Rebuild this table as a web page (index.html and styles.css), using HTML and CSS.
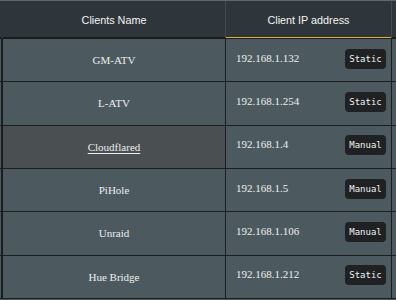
FILE: index.html
```html
<!DOCTYPE html>
<html>
<head>
<meta charset="utf-8">
<link rel="stylesheet" href="styles.css">
</head>
<body>
<div class="clients">
  <div class="row head">
    <div class="stub"></div>
    <div class="cell name">Clients Name</div>
    <div class="cell ip sorted">Client IP address</div>
    <div class="extra"></div>
  </div>
  <div class="row">
    <div class="stub"></div>
    <div class="cell name">GM-ATV</div>
    <div class="cell ip"><span class="addr">192.168.1.132</span><span class="badge">Static</span></div>
    <div class="extra"></div>
  </div>
  <div class="row">
    <div class="stub"></div>
    <div class="cell name">L-ATV</div>
    <div class="cell ip"><span class="addr">192.168.1.254</span><span class="badge">Static</span></div>
    <div class="extra"></div>
  </div>
  <div class="row hover">
    <div class="stub"></div>
    <div class="cell name"><span class="link">Cloudflared</span></div>
    <div class="cell ip"><span class="addr">192.168.1.4</span><span class="badge">Manual</span></div>
    <div class="extra"></div>
  </div>
  <div class="row">
    <div class="stub"></div>
    <div class="cell name">PiHole</div>
    <div class="cell ip"><span class="addr">192.168.1.5</span><span class="badge">Manual</span></div>
    <div class="extra"></div>
  </div>
  <div class="row">
    <div class="stub"></div>
    <div class="cell name">Unraid</div>
    <div class="cell ip"><span class="addr">192.168.1.106</span><span class="badge">Manual</span></div>
    <div class="extra"></div>
  </div>
  <div class="row">
    <div class="stub"></div>
    <div class="cell name">Hue Bridge</div>
    <div class="cell ip"><span class="addr">192.168.1.212</span><span class="badge">Static</span></div>
    <div class="extra"></div>
  </div>
</div>
</body>
</html>
```
FILE: styles.css
```css
html, body {
  margin: 0;
  padding: 0;
  background: #4c5a5f;
  overflow: hidden;
}

.clients {
  width: 100%;
  border-top: 1px solid #5e676b;
}

.row {
  display: grid;
  grid-template-columns: 1px 225px 166px 1fr;
  height: 43.33px;
  box-sizing: border-box;
  border-bottom: 1px solid #1a1e20;
  background: #4c5a5f;
}

.cell {
  box-sizing: border-box;
  display: flex;
  align-items: center;
}

.name {
  border-left: 2px solid #1a1e20;
  border-right: 1px solid #1a1e20;
  justify-content: center;
  font-family: "Liberation Serif", "Times New Roman", serif;
  font-size: 11px;
  color: #eceeef;
}

.ip {
  border-right: 1px solid #1a1e20;
  justify-content: space-between;
  padding: 0 5px 3px 10px;
  font-family: "Liberation Serif", "Times New Roman", serif;
  font-size: 11px;
  color: #eceeef;
}

.addr {
  margin-bottom: 2px;
}

.badge {
  box-sizing: border-box;
  width: 41px;
  height: 20px;
  line-height: 20px;
  text-align: center;
  background: #1f2122;
  color: #f2f2f2;
  border-radius: 4px;
  font-family: "DejaVu Sans Mono", "Liberation Mono", monospace;
  font-size: 9px;
}

.hover .name {
  background: #4a4f51;
}

.link {
  text-decoration: underline;
  text-underline-offset: 2px;
}

/* header */
.head {
  height: 38px;
  background: #2f363b;
  border-bottom: 1px solid #1a1e20;
}

.head .stub,
.head .extra,
.head .cell {
  box-shadow: inset 0 -1px 0 #1a1e20;
}

.head .cell {
  font-family: "Liberation Sans", Arial, sans-serif;
  font-size: 10.8px;
  color: #f4f4f4;
  justify-content: center;
  padding: 0;
}

.head .name {
  border-left-color: #2f363b;
  border-right-color: #454c51;
}

.head .ip {
  border-right-color: #454c51;
}

.head .sorted {
  box-shadow: inset 0 -1px 0 #e0b12c;
}
```
